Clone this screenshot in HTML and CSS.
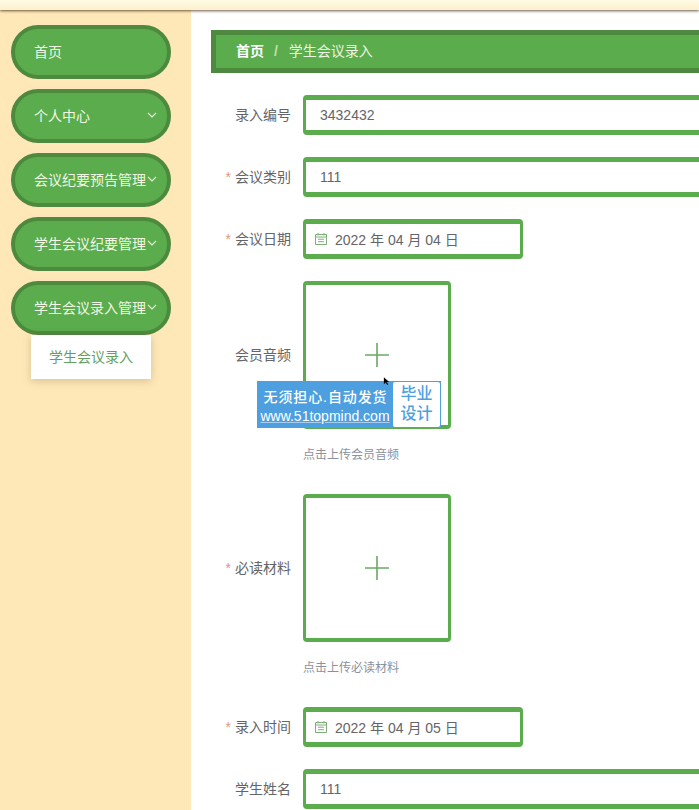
FILE: index.html
```html
<!DOCTYPE html>
<html lang="zh-CN">
  <head>
    <meta charset="UTF-8" />
    <title>学生会议录入</title>
    <link rel="stylesheet" href="styles.css">
  </head>
  <body>
    <div class="topbar"></div>

    <div class="layout">
      <div class="sidebar">
        <div class="nav-item"><span>首页</span></div>
        <div class="nav-item">
          <span>个人中心</span>
          <svg class="chevron" viewBox="0 0 10 10"><path d="M1 3l4 4 4-4" /></svg>
        </div>
        <div class="nav-item">
          <span>会议纪要预告管理</span>
          <svg class="chevron" viewBox="0 0 10 10"><path d="M1 3l4 4 4-4" /></svg>
        </div>
        <div class="nav-item">
          <span>学生会议纪要管理</span>
          <svg class="chevron" viewBox="0 0 10 10"><path d="M1 3l4 4 4-4" /></svg>
        </div>
        <div class="nav-item">
          <span>学生会议录入管理</span>
          <svg class="chevron" viewBox="0 0 10 10"><path d="M1 3l4 4 4-4" /></svg>
        </div>
        <div class="submenu">学生会议录入</div>
      </div>

      <div class="main">
        <div class="breadcrumb">
          <b>首页</b>
          <span class="sep">/</span>
          <span>学生会议录入</span>
        </div>

        <div class="row">
          <label>录入编号</label>
          <div class="input">3432432</div>
        </div>
        <div class="row">
          <label><i>*</i>会议类别</label>
          <div class="input">111</div>
        </div>
        <div class="row">
          <label><i>*</i>会议日期</label>
          <div class="input date">
            <svg class="cal" viewBox="0 0 12 12"><path d="M.5 1.500h11v10H.5zM.5 4h11M3 0v2.500M9 0v2.500M3 6.200h6M3 8.700h6" /></svg>
            <span>2022 年 04 月 04 日</span>
          </div>
        </div>
        <div class="row">
          <label>会员音频</label>
          <div class="upload">
            <svg class="plus" viewBox="0 0 24 24"><path d="M12 0v24M0 12h24" /></svg>
          </div>
        </div>
        <div class="hint">点击上传会员音频</div>
        <div class="row">
          <label><i>*</i>必读材料</label>
          <div class="upload">
            <svg class="plus" viewBox="0 0 24 24"><path d="M12 0v24M0 12h24" /></svg>
          </div>
        </div>
        <div class="hint">点击上传必读材料</div>
        <div class="row">
          <label><i>*</i>录入时间</label>
          <div class="input date">
            <svg class="cal" viewBox="0 0 12 12"><path d="M.5 1.500h11v10H.5zM.5 4h11M3 0v2.500M9 0v2.500M3 6.200h6M3 8.700h6" /></svg>
            <span>2022 年 04 月 05 日</span>
          </div>
        </div>
        <div class="row">
          <label>学生姓名</label>
          <div class="input">111</div>
        </div>
      </div>
    </div>

    <div class="stamp">
      <div class="stamp-text">
        <div class="stamp-title">无须担心.自动发货</div>
        <div class="stamp-url">www.51topmind.com</div>
      </div>
      <div class="stamp-box">毕业<br />设计</div>
    </div>
    <svg class="cursor" viewBox="0 0 8 10"><path d="M1 0v8l2-2 2 3 1-1-2-2.500h3z" /></svg>
  </body>
</html>
```

FILE: styles.css
```css
html,
body {
  height: 100%;
}

body {
  font-family: 'Liberation Sans', 'Noto Sans CJK SC', sans-serif;
  font-size: 14px;
  margin: 0;
  padding: 0;
  background-color: white;
  color: #636569;
  overflow: hidden;
}

.topbar {
  position: relative;
  z-index: 2;
  height: 10px;
  background: linear-gradient(#fffbe6, #fdf0cb);
  box-shadow: 0 1px 3px rgba(70, 50, 20, 0.8);
}

.layout {
  display: flex;
  height: 800px;
}

.sidebar {
  width: 191px;
  flex-shrink: 0;
  box-sizing: border-box;
  padding: 15px 20px 0 11px;
  background-color: #ffe8b8;
}

.nav-item {
  display: flex;
  align-items: center;
  justify-content: space-between;
  box-sizing: border-box;
  height: 54px;
  margin-bottom: 10px;
  padding: 0 9px 0 19px;
  background-color: #5bac4d;
  border: 4px solid #4d8a3f;
  border-radius: 27px;
  color: #f1f8e4;
  white-space: nowrap;
}

.nav-item span {
  padding-bottom: 2px;
}

.chevron {
  width: 10px;
  height: 10px;
  flex-shrink: 0;
  margin-right: 1px;
  margin-bottom: 2px;
}

.chevron path {
  fill: none;
  stroke: #e6f3d8;
  stroke-width: 1.1;
}

.submenu {
  width: 120px;
  height: 44px;
  margin: -10px 0 0 20px;
  background-color: white;
  box-shadow: 0 2px 8px rgba(90, 70, 30, 0.25);
  color: #659f5c;
  line-height: 44px;
  text-align: center;
}

.main {
  flex: 1;
  padding: 20px 0 0 20px;
  min-width: 0;
  overflow: hidden;
}

.breadcrumb {
  width: 720px;
  height: 43px;
  box-sizing: border-box;
  margin-bottom: 22px;
  padding-left: 20px;
  background-color: #5bac4d;
  border: 5px solid #4d8a3f;
  color: #eef6e2;
  line-height: 33px;
}

.breadcrumb b {
  color: white;
}

.sep {
  margin: 0 7px 0 6px;
  color: #c5dfae;
  font-weight: bold;
}

.row {
  display: flex;
  align-items: center;
  gap: 12px;
  margin-bottom: 22px;
}

.row label {
  width: 80px;
  flex-shrink: 0;
  padding-bottom: 2px;
  text-align: right;
  white-space: nowrap;
}

.row label i {
  margin-right: 4px;
  color: #e2947f;
  font-style: normal;
}

.input {
  display: flex;
  align-items: center;
  flex-shrink: 0;
  box-sizing: border-box;
  width: 720px;
  height: 40px;
  padding-left: 14px;
  border-style: solid;
  border-color: #5bac4d;
  border-width: 5px 3px;
  border-radius: 4px;
  background-color: white;
}

.date {
  width: 220px;
  padding-left: 9px;
  white-space: nowrap;
}

.cal {
  width: 12px;
  height: 12px;
  margin-right: 8px;
}

.cal path {
  fill: none;
  stroke: #7fae7a;
  stroke-width: 1;
}

.upload {
  display: flex;
  align-items: center;
  justify-content: center;
  box-sizing: border-box;
  width: 148px;
  height: 148px;
  border-style: solid;
  border-color: #5bac4d;
  border-width: 4px 3px;
  border-radius: 4px;
}

.plus {
  width: 24px;
  height: 24px;
}

.plus path {
  fill: none;
  stroke: #6aa963;
  stroke-width: 1.6;
}

.hint {
  height: 43px;
  margin: -22px 0 22px 92px;
  padding-top: 17px;
  box-sizing: border-box;
  color: #8a92a0;
  font-size: 12px;
  line-height: 18px;
}

.stamp {
  position: absolute;
  left: 257px;
  top: 381px;
  display: flex;
  width: 184px;
  height: 47px;
  background-color: #4d9fdf;
  color: white;
}

.stamp-text {
  width: 136px;
  text-align: center;
}

.stamp-title {
  margin-top: 6px;
  padding-left: 1px;
  font-size: 14px;
  font-weight: 500;
  line-height: 20px;
  letter-spacing: 0.9px;
  white-space: nowrap;
}

.stamp-url {
  font-size: 14px;
  line-height: 18px;
  text-decoration: underline;
  text-decoration-color: rgba(255, 255, 255, 0.5);
  white-space: nowrap;
}

.stamp-box {
  width: 47px;
  height: 45px;
  margin-top: 1px;
  box-sizing: border-box;
  padding-top: 2px;
  background-color: white;
  border-radius: 2px;
  color: #4d9fdf;
  font-size: 16px;
  font-weight: 500;
  line-height: 20px;
  text-align: center;
}

.cursor {
  position: absolute;
  left: 383px;
  top: 377px;
  width: 7px;
  height: 9px;
}
```
